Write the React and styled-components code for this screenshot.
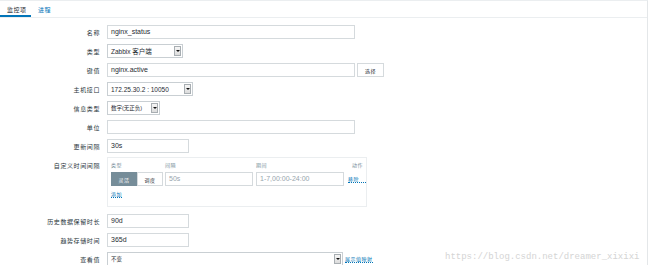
import React from "react";
import styled, { createGlobalStyle } from "styled-components";

const Global = createGlobalStyle`
  body {
    margin: 0;
    background: #ffffff;
    font-family: "Liberation Sans", "Noto Sans CJK SC", sans-serif;
    color: #1f2c33;
  }
`;

const Page = styled.div`
  width: 648px;
  height: 265px;
  border-top: 1px solid #ebeef0;
  border-right: 1px solid #e4e7e9;
  box-sizing: border-box;
  overflow: hidden;
  position: relative;
`;

const Tabs = styled.div`
  display: flex;
  height: 16px;
  border-bottom: 1px solid #ebeef0;
`;

const Tab = styled.div`
  font-family: "Noto Sans CJK SC", sans-serif;
  font-size: 6px;
  letter-spacing: 0.5px;
  white-space: nowrap;
  padding: 4px 0 0 ${(p) => p.pl}px;
  color: ${(p) => (p.active ? "#1f2c33" : "#0275b8")};
  border-bottom: 2px solid ${(p) => (p.active ? "#0275b8" : "transparent")};
  width: ${(p) => p.w}px;
  box-sizing: border-box;
`;

const Form = styled.div`
  display: flex;
  flex-direction: column;
  gap: 5px;
  padding-top: 7px;
`;

const Row = styled.div`
  display: grid;
  grid-template-columns: 100px 1fr;
  column-gap: 7px;
  align-items: ${(p) => (p.top ? "start" : "center")};
  margin-top: ${(p) => p.mt || 0}px;
`;

const Label = styled.div`
  font-family: "Noto Sans CJK SC", sans-serif;
  font-size: 6px;
  letter-spacing: 0.6px;
  text-align: right;
  color: #2a363c;
  padding-top: ${(p) => (p.top ? "4px" : "0")};
`;

const Controls = styled.div`
  display: flex;
  align-items: center;
  gap: 2px;
`;

const Input = styled.div`
  width: ${(p) => p.w}px;
  height: 14px;
  box-sizing: border-box;
  border: 1px solid #d5dadd;
  background: #fff;
  font-size: 7px;
  line-height: 12px;
  padding-left: 3px;
  color: ${(p) => (p.muted ? "#97a5ad" : "#1f2c33")};
  font-family: "Liberation Sans", "Noto Sans CJK SC", sans-serif;
  white-space: nowrap;
  overflow: hidden;
`;

const Select = styled.div`
  width: ${(p) => p.w}px;
  height: 14px;
  box-sizing: border-box;
  border: 1px solid #c9cfd3;
  background: #fff;
  display: flex;
  align-items: center;
  justify-content: space-between;
  padding-left: 3px;
  font-size: 6.5px;
  font-family: "Liberation Sans", "Noto Sans CJK SC", sans-serif;
  color: #1f2c33;
  white-space: nowrap;
`;

const Arrow = styled.div`
  width: 7px;
  height: 10px;
  margin-right: 1px;
  border: 1px solid #a8aeb2;
  background: linear-gradient(#f6f6f6, #dcdcdc);
  box-sizing: border-box;
  display: flex;
  align-items: center;
  justify-content: center;
  &::after {
    content: "";
    border-left: 2px solid transparent;
    border-right: 2px solid transparent;
    border-top: 2px solid #111;
  }
`;

const SmallButton = styled.div`
  height: 14px;
  width: 27px;
  box-sizing: border-box;
  border: 1px solid #d5dadd;
  background: #fff;
  font-family: "Noto Sans CJK SC", sans-serif;
  font-size: 5px;
  letter-spacing: 0.5px;
  display: flex;
  align-items: center;
  justify-content: center;
  color: #1f2c33;
`;

const IntervalBox = styled.div`
  width: 260px;
  height: 50px;
  box-sizing: border-box;
  border: 1px solid #ebeef0;
  padding: 2px 0 0 3px;
  display: flex;
  flex-direction: column;
`;

const BoxGrid = styled.div`
  display: grid;
  grid-template-columns: 54px 91px 92px auto;
  align-items: center;
  row-gap: 2px;
`;

const Head = styled.div`
  font-family: "Noto Sans CJK SC", sans-serif;
  font-size: 5px;
  letter-spacing: 0.5px;
  color: #768d99;
  height: 10px;
  line-height: 10px;
  text-align: ${(p) => (p.right ? "right" : "left")};
  padding-right: ${(p) => (p.right ? "3px" : "0")};
`;

const Segmented = styled.div`
  display: flex;
  width: 52px;
  height: 14px;
`;

const Seg = styled.div`
  flex: 1;
  box-sizing: border-box;
  font-family: "Noto Sans CJK SC", sans-serif;
  font-size: 5px;
  letter-spacing: 0.5px;
  display: flex;
  align-items: center;
  justify-content: center;
  background: ${(p) => (p.active ? "#768d99" : "#fff")};
  color: ${(p) => (p.active ? "#fff" : "#1f2c33")};
  border: 1px solid ${(p) => (p.active ? "#768d99" : "#d5dadd")};
`;

const Link = styled.span`
  font-family: "Noto Sans CJK SC", sans-serif;
  font-size: 5px;
  letter-spacing: 0.5px;
  color: #0275b8;
  border-bottom: 1px dotted #0275b8;
  line-height: 7px;
  white-space: nowrap;
  align-self: ${(p) => (p.start ? "flex-start" : "auto")};
  margin-top: ${(p) => p.mt || 0}px;
`;

const Watermark = styled.div`
  position: absolute;
  left: 445px;
  top: 251px;
  font-family: "Liberation Mono", monospace;
  font-size: 9px;
  color: #d4d4d4;
`;

export default function App() {
  return (
    <Page>
      <Global />
      <Tabs>
        <Tab active w={31} pl={7}>监控项</Tab>
        <Tab w={26} pl={7}>进程</Tab>
      </Tabs>
      <Form>
        <Row>
          <Label>名称</Label>
          <Controls><Input w={248}>nginx_status</Input></Controls>
        </Row>
        <Row>
          <Label>类型</Label>
          <Controls><Select w={76}>Zabbix 客户端<Arrow /></Select></Controls>
        </Row>
        <Row>
          <Label>键值</Label>
          <Controls>
            <Input w={248}>nginx.active</Input>
            <SmallButton>选择</SmallButton>
          </Controls>
        </Row>
        <Row>
          <Label>主机接口</Label>
          <Controls><Select w={86}>172.25.30.2 : 10050<Arrow /></Select></Controls>
        </Row>
        <Row>
          <Label>信息类型</Label>
          <Controls><Select w={53}><span style={{ fontSize: 5.5 }}>数字(无正负)</span><Arrow /></Select></Controls>
        </Row>
        <Row>
          <Label>单位</Label>
          <Controls><Input w={248} /></Controls>
        </Row>
        <Row>
          <Label>更新间隔</Label>
          <Controls><Input w={82}>30s</Input></Controls>
        </Row>
        <Row top mt={-1}>
          <Label top>自定义时间间隔</Label>
          <IntervalBox>
            <BoxGrid>
              <Head>类型</Head>
              <Head>间隔</Head>
              <Head>期间</Head>
              <Head right>动作</Head>
              <Segmented>
                <Seg active>灵活</Seg>
                <Seg>调度</Seg>
              </Segmented>
              <Input w={88} muted>50s</Input>
              <Input w={88} muted>1-7,00:00-24:00</Input>
              <Link>移除</Link>
            </BoxGrid>
            <Link start mt={4}>添加</Link>
          </IntervalBox>
        </Row>
        <Row mt={2}>
          <Label>历史数据保留时长</Label>
          <Controls><Input w={82}>90d</Input></Controls>
        </Row>
        <Row>
          <Label>趋势存储时间</Label>
          <Controls><Input w={82}>365d</Input></Controls>
        </Row>
        <Row>
          <Label>查看值</Label>
          <Controls>
            <Select w={236}><span style={{ fontSize: 5.5 }}>不变</span><Arrow /></Select>
            <Link>展示值映射</Link>
          </Controls>
        </Row>
      </Form>
      <Watermark>https://blog.csdn.net/dreamer_xixixi</Watermark>
    </Page>
  );
}
